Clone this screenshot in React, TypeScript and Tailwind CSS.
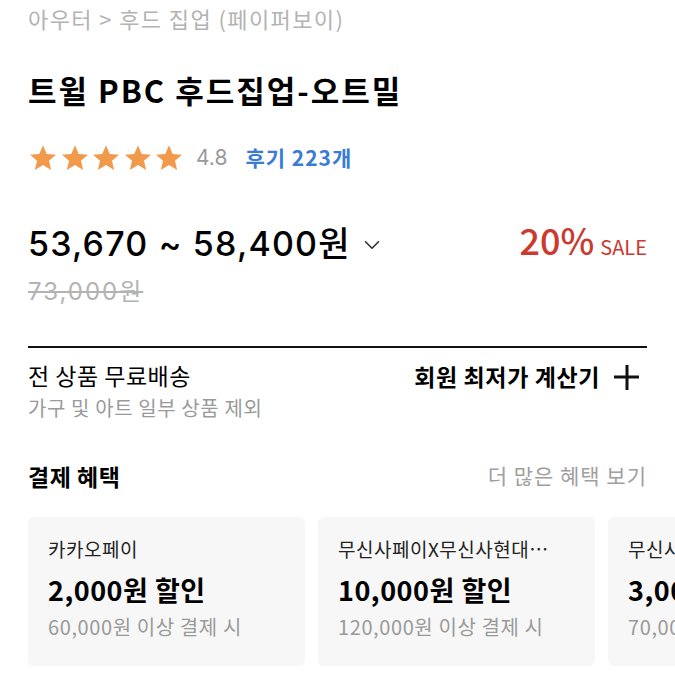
import React from 'react';
import { ChevronDown } from 'lucide-react';

const Star: React.FC = () => (
  <svg width="30" height="30" viewBox="0 0 24 24">
    <path
      d="M12 1.8l3 6.9 7.4.6-5.6 4.9 1.7 7.3L12 17.6l-6.5 3.9 1.7-7.3-5.6-4.9 7.4-.6z"
      fill="#f29a4c"
    />
  </svg>
);

const benefits = [
  { name: '카카오페이', amount: '2,000원 할인', cond: '60,000원 이상 결제 시' },
  { name: '무신사페이X무신사현대카드', amount: '10,000원 할인', cond: '120,000원 이상 결제 시' },
  { name: '무신사페이X현대카드', amount: '3,000원 할인', cond: '70,000원 이상 결제 시' },
];

const num = { fontFamily: 'Inter, "Noto Sans CJK KR", sans-serif' };

export default function App() {
  return (
    <div
      className="w-[675px] h-[675px] overflow-hidden bg-white text-black pl-7"
      style={{ fontFamily: '"Noto Sans CJK KR", "Noto Sans", sans-serif' }}
    >
      <div className="pr-7">
        <div className="text-[22px] leading-[36px] tracking-[1.4px] text-[#b3b3b3]">
          아우터 &gt; 후드 집업 (페이퍼보이)
        </div>

        <h1 className="mt-[34px] text-[31px] leading-[40px] font-bold tracking-[2px]">
          트윌 PBC 후드집업-오트밀
        </h1>

        <div className="mt-[33px] flex items-center h-[30px]">
          <div className="flex gap-[1.5px]">
            <Star />
            <Star />
            <Star />
            <Star />
            <Star />
          </div>
          <span className="ml-[12px] text-[21px] text-[#9a9a9a]" style={num}>4.8</span>
          <span className="ml-[18px] text-[21px] tracking-[1px] font-bold text-[#3a7bd5]">후기 223개</span>
        </div>

        <div className="mt-[48px] flex items-center justify-between h-[44px]">
          <div className="flex items-center">
            <span className="text-[34px] font-medium tracking-[1.2px]" style={num}>53,670 ~ 58,400원</span>
            <ChevronDown className="ml-[8px] mt-[4px] w-[26px] h-[26px] text-[#333]" strokeWidth={1.5} />
          </div>
          <div className="flex items-baseline pb-[8px] text-[#cc3a2f]">
            <span className="text-[36px] font-medium">20%</span>
            <span className="ml-[6px] text-[20px]">SALE</span>
          </div>
        </div>

        <div className="mt-[11px] text-[24px] leading-[32px] tracking-[2px] text-[#b3b3b3] line-through" style={num}>
          73,000원
        </div>

        <div className="mt-[38px] h-[2px] bg-[#111]" />

        <div className="mt-[11px] flex justify-between">
          <div>
            <div className="text-[23px] leading-[32px] tracking-[0.5px]">전 상품 무료배송</div>
            <div className="mt-[3px] text-[20px] leading-[28px] tracking-[0.6px] text-[#9a9a9a]">
              가구 및 아트 일부 상품 제외
            </div>
          </div>
          <div className="flex items-start pt-[2px] pr-[7px]">
            <span className="text-[23px] leading-[30px] tracking-[0.6px] font-bold">회원 최저가 계산기</span>
            <svg className="ml-[14px] mt-[3px]" width="26" height="26" viewBox="0 0 26 26">
              <path d="M0 13h25M13 1v25" stroke="#111" strokeWidth="3" />
            </svg>
          </div>
        </div>

        <div className="mt-[38px] flex items-center justify-between">
          <span className="text-[23px] leading-[32px] tracking-[0.5px] font-bold">결제 혜택</span>
          <span className="text-[21px] tracking-[1px] text-[#a0a0a0]">더 많은 혜택 보기</span>
        </div>
      </div>

      <div className="mt-[25px] flex gap-[13px]">
        {benefits.map((b) => (
          <div
            key={b.name}
            className="w-[277px] h-[149px] shrink-0 rounded-[6px] bg-[#f7f7f7] pl-[20px] pr-[38px] pt-[18px]"
          >
            <div className="text-[19px] leading-[28px] tracking-[0.5px] text-[#222] truncate">{b.name}</div>
            <div className="mt-[9px] text-[27px] leading-[36px] tracking-[0.5px] font-bold">{b.amount}</div>
            <div className="mt-[5px] text-[20px] leading-[28px] tracking-[0.6px] text-[#9a9a9a] whitespace-nowrap">
              {b.cond}
            </div>
          </div>
        ))}
      </div>
    </div>
  );
}
